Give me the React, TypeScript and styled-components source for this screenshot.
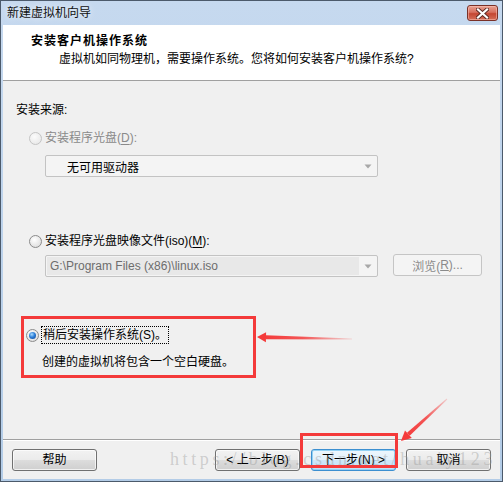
import React from 'react';
import styled, { createGlobalStyle } from 'styled-components';

const GlobalStyle = createGlobalStyle`
  html, body {
    margin: 0;
    padding: 0;
    background: #fff;
  }
  body {
    font-family: "Liberation Sans", "Noto Sans CJK SC", sans-serif;
    font-size: 12px;
    color: #000;
  }
`;

const RED = '#f43a3a';

type Pt = [number, number];

// tapered annotation arrow: thin faded tail, solid head
const arrowShape = (tail: Pt, tip: Pt, headLen = 9, headHalf = 5) => {
  const dx = tip[0] - tail[0];
  const dy = tip[1] - tail[1];
  const len = Math.hypot(dx, dy);
  const ux = dx / len;
  const uy = dy / len;
  const nx = -uy;
  const ny = ux;
  const base: Pt = [tip[0] - ux * headLen, tip[1] - uy * headLen];
  const p = (pt: Pt, k: number): string => `${(pt[0] + nx * k).toFixed(1)},${(pt[1] + ny * k).toFixed(1)}`;
  return {
    shaft: [p(tail, 0.5), p(base, 2), p(base, -2), p(tail, -0.5)].join(' '),
    head: [`${tip[0]},${tip[1]}`, p(base, headHalf), p(base, -headHalf)].join(' '),
  };
};

const CloseIcon = () => (
  <svg width="13" height="11" viewBox="0 0 13 11">
    <path d="M2 1.5 L11 9.5 M11 1.5 L2 9.5" stroke="#5b2a24" strokeWidth="4" strokeLinecap="square" />
    <path d="M2 1.5 L11 9.5 M11 1.5 L2 9.5" stroke="#fff" strokeWidth="2.2" strokeLinecap="square" />
  </svg>
);

const DropArrow = () => (
  <svg width="8" height="5" viewBox="0 0 8 5">
    <path d="M0.5 0.5 L7.5 0.5 L4 4.5 Z" fill="#a8a8a8" />
  </svg>
);

const Annotations = () => {
  const a1 = arrowShape([352, 339], [257, 337], 9, 5);
  const a2 = arrowShape([447, 399], [401, 441], 10, 5);
  return (
    <Overlay width="503" height="482" viewBox="0 0 503 482">
      <defs>
        <linearGradient id="fade1" gradientUnits="userSpaceOnUse" x1="352" y1="339" x2="262" y2="337">
          <stop offset="0" stopColor={RED} stopOpacity="0.15" />
          <stop offset="0.55" stopColor={RED} stopOpacity="0.85" />
          <stop offset="1" stopColor={RED} stopOpacity="1" />
        </linearGradient>
        <linearGradient id="fade2" gradientUnits="userSpaceOnUse" x1="447" y1="399" x2="405" y2="437">
          <stop offset="0" stopColor={RED} stopOpacity="0.2" />
          <stop offset="0.5" stopColor={RED} stopOpacity="0.85" />
          <stop offset="1" stopColor={RED} stopOpacity="1" />
        </linearGradient>
      </defs>
      <polygon points={a1.shaft} fill="url(#fade1)" />
      <polygon points={a1.head} fill={RED} />
      <polygon points={a2.shaft} fill="url(#fade2)" />
      <polygon points={a2.head} fill={RED} />
    </Overlay>
  );
};

export default function App() {
  return (
    <>
      <GlobalStyle />
      <Window>
        <TitleBar>
          <Caption>新建虚拟机向导</Caption>
          <CloseButton>
            <CloseIcon />
          </CloseButton>
        </TitleBar>

        <Client>
          <Header>
            <HeaderTitle>安装客户机操作系统</HeaderTitle>
            <HeaderText>虚拟机如同物理机，需要操作系统。您将如何安装客户机操作系统?</HeaderText>
          </Header>

          <Body>
            <SectionLabel>安装来源:</SectionLabel>

            <RadioRow $top={12} $disabled>
              <Radio $disabled />
              <span>
                安装程序光盘(<u>D</u>):
              </span>
            </RadioRow>
            <Combo $top={9} $disabled>
              <ComboText $indent={21}>无可用驱动器</ComboText>
              <ComboArrow>
                <DropArrow />
              </ComboArrow>
            </Combo>

            <RadioRow $top={56}>
              <Radio />
              <span>
                安装程序光盘映像文件(iso)(<u>M</u>):
              </span>
            </RadioRow>
            <FileRow>
              <Combo $disabled>
                <ComboText $indent={3} $muted>
                  G:\Program Files (x86)\linux.iso
                </ComboText>
                <ComboArrow>
                  <DropArrow />
                </ComboArrow>
              </Combo>
              <BrowseButton>
                浏览(<u>R</u>)...
              </BrowseButton>
            </FileRow>

            <Highlight>
              <RadioRow>
                <Radio $checked />
                <FocusLabel>稍后安装操作系统(S)。</FocusLabel>
              </RadioRow>
              <OptionNote>创建的虚拟机将包含一个空白硬盘。</OptionNote>
            </Highlight>
          </Body>

          <Footer>
            <Button>帮助</Button>
            <NavGroup>
              <Button>&lt; 上一步(B)</Button>
              <Button $default>下一步(N) &gt;</Button>
              <Button>取消</Button>
            </NavGroup>
          </Footer>
        </Client>

        <Watermark>https://blog.csdn.net/huaiy123</Watermark>
        <MarkBox />
        <Annotations />
      </Window>
    </>
  );
}

const Window = styled.div`
  position: relative;
  width: 503px;
  height: 482px;
  box-sizing: border-box;
  border: 1px solid #4c5a6b;
  background: linear-gradient(#c6d9ef, #b3cce7);
  display: flex;
  flex-direction: column;
  overflow: hidden;
`;

const TitleBar = styled.div`
  height: 24px;
  flex-shrink: 0;
  display: flex;
  align-items: center;
  justify-content: space-between;
  padding: 0 4px 0 6px;
`;

const Caption = styled.div`
  font-size: 12px;
  line-height: 16px;
  color: #111;
  text-shadow: 0 0 6px rgba(255, 255, 255, 0.9);
`;

const CloseButton = styled.div`
  width: 31px;
  height: 16px;
  box-sizing: border-box;
  border: 1px solid #7a3128;
  border-radius: 3px;
  background: linear-gradient(#e8a293 0%, #d7705f 45%, #c44632 55%, #d5705a 100%);
  box-shadow: inset 0 0 0 1px rgba(255, 200, 190, 0.5);
  display: flex;
  align-items: center;
  justify-content: center;
`;

const Client = styled.div`
  flex: 1;
  margin: 0 2px 2px;
  display: flex;
  flex-direction: column;
  background: #f0f0f0;
`;

const Header = styled.div`
  height: 56px;
  flex-shrink: 0;
  box-sizing: border-box;
  padding: 8px 0 0 28px;
  background: #fff;
  border-bottom: 1px solid #a0a0a0;
`;

const HeaderTitle = styled.div`
  font-weight: bold;
  letter-spacing: 1px;
  line-height: 16px;
`;

const HeaderText = styled.div`
  margin: 2px 0 0 28px;
  line-height: 16px;
`;

const Body = styled.div`
  flex: 1;
  display: flex;
  flex-direction: column;
  align-items: flex-start;
  padding: 21px 0 0 13px;
`;

const SectionLabel = styled.div`
  line-height: 16px;
`;

const RadioRow = styled.div<{ $top?: number; $disabled?: boolean }>`
  display: flex;
  align-items: center;
  gap: 3px;
  height: 16px;
  margin: ${({ $top }) => $top ?? 0}px 0 0 13px;
  color: ${({ $disabled }) => ($disabled ? '#8a8a8a' : '#000')};
  line-height: 16px;

  u {
    text-underline-offset: 2px;
  }
`;

const Radio = styled.span<{ $checked?: boolean; $disabled?: boolean }>`
  position: relative;
  flex-shrink: 0;
  width: 11px;
  height: 11px;
  border-radius: 50%;
  border: 1px solid ${({ $disabled }) => ($disabled ? '#c4c4c4' : '#8b8b8b')};
  background: ${({ $disabled }) =>
    $disabled
      ? 'radial-gradient(circle at 40% 35%, #fbfbfb, #e4e4e4)'
      : 'radial-gradient(circle at 40% 35%, #ffffff, #d6d6d6)'};

  ${({ $checked }) =>
    $checked
      ? `
    &::after {
      content: '';
      position: absolute;
      left: 2px;
      top: 2px;
      width: 7px;
      height: 7px;
      border-radius: 50%;
      background: radial-gradient(circle at 40% 35%, #a9dcff 0%, #2d7fd8 45%, #0d3f8e 100%);
    }
  `
      : ''}
`;

const Combo = styled.div<{ $top?: number; $disabled?: boolean }>`
  width: 333px;
  height: 22px;
  box-sizing: border-box;
  margin: ${({ $top }) => $top ?? 0}px 0 0 29px;
  border: 1px solid #c3c3c3;
  border-radius: 2px;
  background: #f4f4f4;
  display: flex;
  align-items: stretch;
`;

const ComboText = styled.div<{ $indent: number; $muted?: boolean }>`
  flex: 1;
  padding-left: ${({ $indent }) => $indent}px;
  display: flex;
  align-items: center;
  color: ${({ $muted }) => ($muted ? '#6d6d6d' : '#000')};
  background: ${({ $muted }) => ($muted ? '#e8e8e8' : 'transparent')};
  margin: ${({ $muted }) => ($muted ? '1px 0 1px 1px' : '0')};
  font-size: 12px;
`;

const ComboArrow = styled.div`
  width: 18px;
  display: flex;
  align-items: center;
  justify-content: center;
`;

const FileRow = styled.div`
  display: flex;
  align-items: flex-start;
  margin-top: 6px;
`;

const BrowseButton = styled.div`
  width: 89px;
  height: 22px;
  box-sizing: border-box;
  margin: -1px 0 0 15px;
  border: 1px solid #c5c5c5;
  border-radius: 3px;
  background: #f4f4f4;
  color: #8a8a8a;
  display: flex;
  align-items: center;
  justify-content: center;
`;

const Highlight = styled.div`
  width: 235px;
  height: 62px;
  box-sizing: border-box;
  margin: 39px 0 0 5px;
  border: 3px solid ${RED};
  padding-top: 8px;

  ${RadioRow} {
    margin-left: 2px;
  }
`;

const FocusLabel = styled.span`
  outline: 1px dotted #000;
  outline-offset: 0;
  padding: 0 1px;
`;

const OptionNote = styled.div`
  margin: 11px 0 0 18px;
  line-height: 16px;
`;

const Footer = styled.div`
  height: 40px;
  flex-shrink: 0;
  box-sizing: border-box;
  border-top: 1px solid #a0a0a0;
  box-shadow: inset 0 1px 0 #fff;
  padding: 9px 9px 8px;
  display: flex;
  align-items: flex-start;
  justify-content: space-between;
`;

const NavGroup = styled.div`
  display: flex;
  gap: 10px;

  & > :first-child {
    margin-right: 1px;
  }
`;

const Button = styled.div<{ $default?: boolean }>`
  width: 85px;
  height: 22px;
  box-sizing: border-box;
  border: 1px solid ${({ $default }) => ($default ? '#3c8fd0' : '#707070')};
  border-radius: 3px;
  background: ${({ $default }) =>
    $default
      ? 'linear-gradient(#eef7fd 0%, #e2f1fb 50%, #cfe7f8 51%, #c2e1f7 100%)'
      : 'linear-gradient(#f2f2f2 0%, #ebebeb 50%, #dddddd 51%, #cfcfcf 100%)'};
  box-shadow: inset 0 0 0 1px ${({ $default }) => ($default ? '#94d2f4' : 'rgba(255,255,255,0.7)')};
  display: flex;
  align-items: center;
  justify-content: center;
  line-height: 16px;
`;

const Watermark = styled.div`
  position: absolute;
  left: 169px;
  top: 448px;
  font-family: "Liberation Serif", serif;
  font-size: 18px;
  letter-spacing: 3.6px;
  color: rgba(150, 150, 150, 0.4);
  pointer-events: none;
  white-space: nowrap;
`;

const MarkBox = styled.div`
  position: absolute;
  left: 299px;
  top: 432px;
  width: 98px;
  height: 35px;
  box-sizing: border-box;
  border: 3px solid ${RED};
  pointer-events: none;
`;

const Overlay = styled.svg`
  position: absolute;
  left: -1px;
  top: -1px;
  pointer-events: none;
`;
